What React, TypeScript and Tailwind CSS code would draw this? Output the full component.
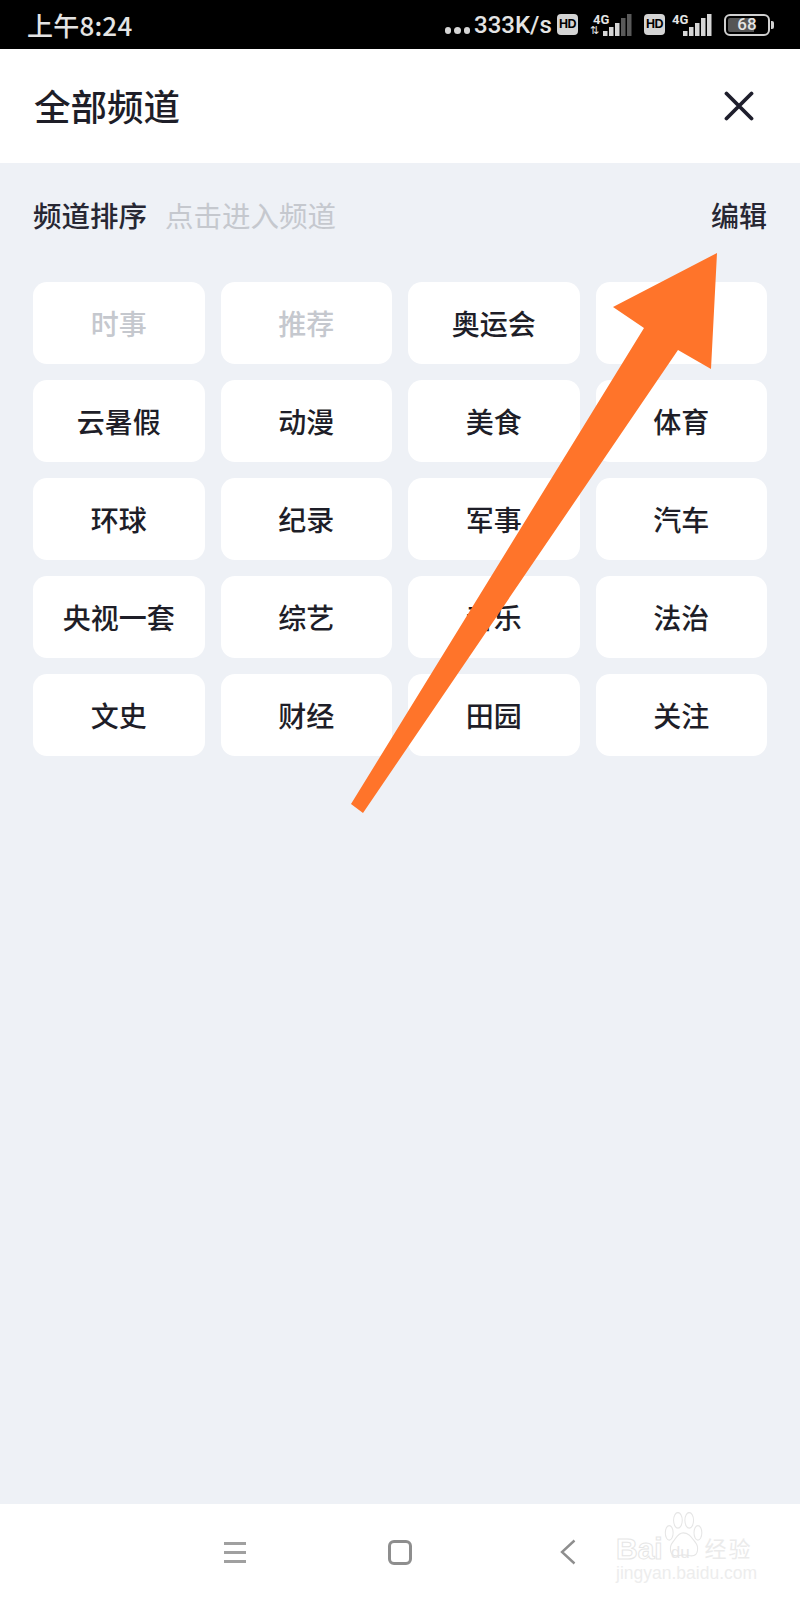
const cjk = "font-['Noto_Sans_CJK_SC','Noto_Sans',sans-serif]";

const channels = [
  "时事", "推荐", "奥运会", "",
  "云暑假", "动漫", "美食", "体育",
  "环球", "纪录", "军事", "汽车",
  "央视一套", "综艺", "音乐", "法治",
  "文史", "财经", "田园", "关注",
];

function Signal({ dim }: { dim?: boolean }) {
  const bars = [
    [0, 17, 5],
    [6, 13, 9],
    [12, 9, 13],
    [18, 4, 18],
    [24, 0, 22],
  ];
  return (
    <svg width="29" height="22" viewBox="0 0 29 22" className="block">
      {bars.map(([x, y, h], i) => (
        <rect key={i} x={x} y={y} width="4.5" height={h} fill={dim && i > 2 ? "#5a5a5a" : "#d6d6d6"} />
      ))}
    </svg>
  );
}

function HdBadge() {
  return (
    <span className="flex h-[21px] w-[21px] items-center justify-center rounded-[4px] bg-[#d4d4d4] font-['Liberation_Sans',sans-serif] text-[12.5px] font-bold leading-none tracking-[-0.5px] text-black">
      HD
    </span>
  );
}

function StatusBar() {
  return (
    <div className="flex h-[49px] items-center justify-between bg-black pl-[27px] pr-[26px] text-[#e4e4e4]">
      <span className={`${cjk} text-[26px] font-medium leading-none tracking-[0.2px]`}>上午8:24</span>
      <div className="flex items-center">
        <span className="mt-[12px] flex gap-[3px]">
          <i className="h-[6.5px] w-[6.5px] rounded-full bg-[#d6d6d6]" />
          <i className="h-[6.5px] w-[6.5px] rounded-full bg-[#d6d6d6]" />
          <i className="h-[6.5px] w-[6.5px] rounded-full bg-[#d6d6d6]" />
        </span>
        <span className="ml-[4px] w-[77px] font-['Roboto',sans-serif] text-[24px] font-medium leading-none">333K/s</span>
        <span className="ml-[6px]"><HdBadge /></span>
        <span className="relative ml-[12px] flex h-[22px] w-[42px] items-end justify-end">
          <span className="absolute left-[3px] top-[-1px] font-['Roboto',sans-serif] text-[13px] font-bold leading-none">4G</span>
          <span className="absolute bottom-0 left-0 font-['Roboto',sans-serif] text-[11px] leading-none">⇅</span>
          <Signal dim />
        </span>
        <span className="ml-[12px]"><HdBadge /></span>
        <span className="relative ml-[7px] flex h-[22px] w-[40px] items-end justify-end">
          <span className="absolute left-0 top-[-1px] font-['Roboto',sans-serif] text-[13px] font-bold leading-none">4G</span>
          <Signal />
        </span>
        <span className="ml-[12px] flex items-center">
          <span className="flex h-[22px] w-[46px] items-center rounded-[6px] border-2 border-[#d0d0d0] p-[2px]">
            <span className="flex h-full w-full items-center justify-center rounded-[2px] bg-[linear-gradient(90deg,#555_0,#555_68%,#000_68%)] font-['Roboto',sans-serif] text-[17px] font-medium leading-none">
              68
            </span>
          </span>
          <span className="ml-[1px] h-[8px] w-[3px] rounded-r-[2px] bg-[#d0d0d0]" />
        </span>
      </div>
    </div>
  );
}

function Arrow() {
  return (
    <svg className="pointer-events-none absolute left-0 top-0" width="800" height="900" viewBox="0 0 800 900">
      <polygon
        points="717,253 711,369 678,350 363,813 351,804 644,328 613,307"
        fill="#ff742a"
      />
    </svg>
  );
}

function Watermark() {
  return (
    <div className="pointer-events-none absolute left-[616px] top-[30px] w-[144px] text-[#e8e8e8]">
      <svg className="absolute left-[48px] top-[-22px]" width="40" height="48" viewBox="0 0 46 46" preserveAspectRatio="none" fill="none" stroke="#e6e6e6" strokeWidth="1.2">
        <ellipse cx="6" cy="20" rx="4.5" ry="7" />
        <ellipse cx="16" cy="8" rx="5" ry="7.5" />
        <ellipse cx="29" cy="8" rx="5" ry="7.5" />
        <ellipse cx="39" cy="20" rx="4.5" ry="7" />
        <path d="M22 20c-6 0-8 5-12 9-4 4-4 13 4 13 4 0 6-1 9-1s5 1 9 1c8 0 8-9 4-13-4-4-7-9-14-9z" />
      </svg>
      <div className="flex items-center leading-none">
        <span className="font-['Liberation_Sans',sans-serif] text-[30px] font-bold leading-none text-transparent [-webkit-text-stroke:1px_#e6e6e6]">Bai</span>
        <span className="ml-[8px] mt-[6px] font-['Liberation_Sans',sans-serif] text-[17px] leading-none">du</span>
        <span className={`${cjk} ml-[15px] mt-[-4px] text-[22px] leading-none tracking-[2px] text-[#ebebeb]`}>经验</span>
      </div>
      <div className="mt-[1px] font-['Liberation_Sans',sans-serif] text-[17.5px] leading-none text-[#ededed]">jingyan.baidu.com</div>
    </div>
  );
}

export default function App() {
  return (
    <div className={`${cjk} relative flex h-[1600px] w-[800px] flex-col overflow-hidden bg-[#eef1f6]`}>
      <StatusBar />
      <div className="flex h-[114px] items-center justify-between bg-white pl-[34px] pr-[46px]">
        <h1 className="text-[36.5px] font-medium leading-none text-[#1e1e28]">全部频道</h1>
        <svg width="30" height="30" viewBox="0 0 30 30" fill="none" stroke="#1e1e2c" strokeWidth="3.8" strokeLinecap="round">
          <path d="M2.5 2.5 L27.5 27.5 M27.5 2.5 L2.5 27.5" />
        </svg>
      </div>

      <div className="flex-1 px-[33px]">
        <div className="mt-[31px] flex h-[42px] items-center justify-between">
          <div className="flex items-center">
            <span className="text-[28.5px] font-medium leading-none text-[#272733]">频道排序</span>
            <span className="ml-[18px] text-[28.5px] leading-none text-[#c5c8ce]">点击进入频道</span>
          </div>
          <span className="text-[28px] font-medium leading-none text-[#272733]">编辑</span>
        </div>
        <div className="mt-[46px] grid grid-cols-4 gap-x-[16px] gap-y-[16px]">
          {channels.map((name, i) => (
            <div
              key={i}
              className={`flex h-[82px] items-center justify-center rounded-[14px] bg-white text-[28px] font-medium leading-none ${
                i < 2 ? "text-[#c5c8ce]" : "text-[#1e1e28]"
              }`}
            >
              {name}
            </div>
          ))}
        </div>
      </div>

      <div className="relative flex h-[96px] items-center bg-white pl-[224px]">
        <div className="flex w-[22px] flex-col gap-[6px]">
          <i className="h-[3px] bg-[#a0a0a0]" />
          <i className="h-[3px] bg-[#a0a0a0]" />
          <i className="h-[3px] bg-[#a0a0a0]" />
        </div>
        <div className="ml-[142px] h-[25px] w-[24px] rounded-[6px] border-[3px] border-[#8e8e8e]" />
        <svg className="ml-[148px]" width="16" height="26" viewBox="0 0 16 26" fill="none" stroke="#8e8e8e" strokeWidth="2.4">
          <path d="M14.5 1.5 L2 13 L14.5 24.5" />
        </svg>
        <Watermark />
      </div>
      <Arrow />
    </div>
  );
}
